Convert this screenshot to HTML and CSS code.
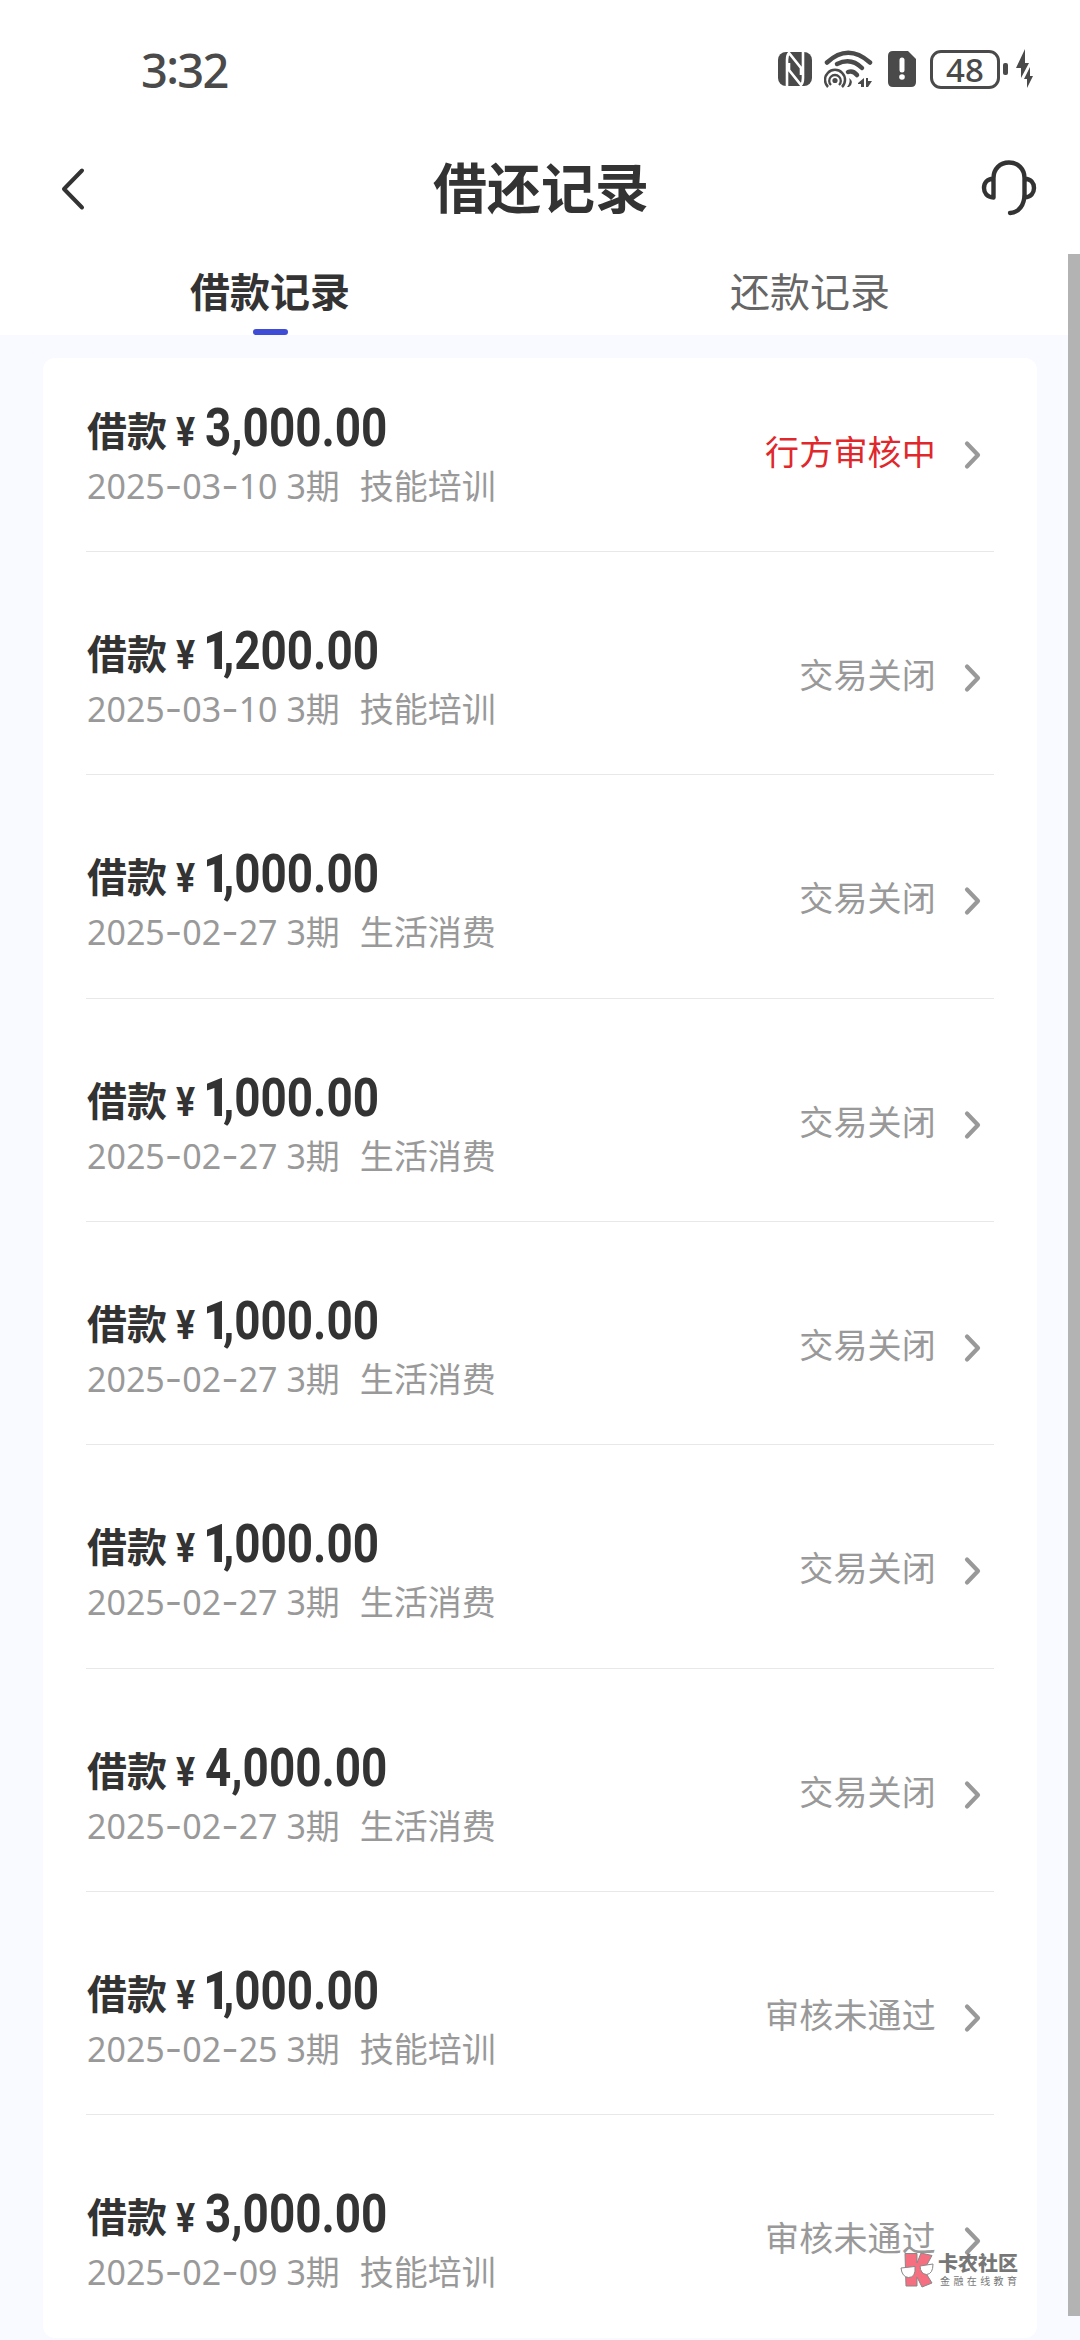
FILE: index.html
```html
<!DOCTYPE html>
<html lang="zh-CN">
<head>
<meta charset="utf-8">
<title>借还记录</title>
<link rel="stylesheet" href="styles.css">
</head>
<body>
<svg width="0" height="0" class="defs"><symbol id="chev" viewBox="0 0 20 32"><path d="M4 4.500L15 16L4 27.500" fill="none" stroke="#999" stroke-width="4.200" stroke-linecap="round" stroke-linejoin="round"/></symbol></svg>
<header class="status">
  <div class="clock">3<span class="colon">:</span>32</div>
  <div class="sys">
    <svg class="nfc" width="34" height="36" viewBox="0 0 34 36"><rect x="0" y="1" width="34" height="34" rx="8" fill="#4a4a4a"/><path d="M9 36V9Q9 4 11 2L23 17V24M25 0V27Q25 32 23 34L11 19V12" fill="none" stroke="#fff" stroke-width="2.600"/></svg>
    <svg class="wifi" width="50" height="38" viewBox="0 0 50 38" fill="none" stroke="#4a4a4a"><path d="M3 12.500Q24-7 46 12.500" stroke-width="4.500" stroke-linecap="round"/><path d="M13 14Q27 7 38 18" stroke-width="4.500" stroke-linecap="round"/><path d="M24 22Q29 20 33 25" stroke-width="4.500" stroke-linecap="round"/><path d="M4 37A10 10 0 1 1 18 37" stroke-width="2.500"/><path d="M7 35A5.800 5.800 0 1 1 15 35" stroke-width="2.300"/><circle cx="11" cy="30.500" r="2.600" fill="#4a4a4a" stroke="none"/><path d="M25 28Q31 32 25 37H23Q27 32 25 28ZM34 33L40 28V37H37V34H34ZM42 28H44V31H48L44 37H42Z" fill="#4a4a4a" stroke="none"/></svg>
    <svg class="sim" width="28" height="36" viewBox="0 0 28 36"><path d="M5 0H20L28 8V31Q28 36 23 36H5Q0 36 0 31V5Q0 0 5 0Z" fill="#4a4a4a"/><path d="M14 9V19" stroke="#fff" stroke-width="5" stroke-linecap="round"/><circle cx="14" cy="26" r="2.800" fill="#fff"/></svg>
    <div class="battery">48</div><div class="nub"></div>
    <svg class="bolt" width="18" height="40" viewBox="0 0 18 40" fill="#4a4a4a"><path d="M9 0L0 19H5V29L13 14H9ZM14 18L8 30H11V39L17 27H14Z"/></svg>
  </div>
</header>
<nav class="nav">
  <svg class="back" width="30" height="44" viewBox="0 0 30 44"><path d="M23 3.500L5 22L23 40.500" fill="none" stroke="#333" stroke-width="4" stroke-linecap="round" stroke-linejoin="round"/></svg>
  <h1>借还记录</h1>
  <svg class="help" width="56" height="56" viewBox="0 0 56 56"><path d="M12.500 37.500V18C12.500 9 19 2.500 28 2.500S43.500 9 43.500 18V34C43.500 45 38 52.500 29 53M12.500 18.500C6 19 3 23 3 28S6 37 12.500 37.500M43.500 18.500C50 19 53 23 53 28S50 37 43.500 37.500" fill="none" stroke="#333" stroke-width="4.400" stroke-linecap="round" stroke-linejoin="round"/></svg>
</nav>
<div class="tabs"><div class="tab active">借款记录</div><div class="tab">还款记录</div></div>
<main class="page">
<section class="card">
  <article class="row"><div class="info"><div class="loan">借款<span class="yen">¥</span><span class="amount">3,000.00</span></div><div class="meta">2025<i>-</i>03<i>-</i>10 3期<span class="use">技能培训</span></div></div><div class="state pending">行方审核中</div><svg class="chev"><use href="#chev"/></svg></article>
  <article class="row"><div class="info"><div class="loan">借款<span class="yen">¥</span><span class="amount"><b>1</b>,200.00</span></div><div class="meta">2025<i>-</i>03<i>-</i>10 3期<span class="use">技能培训</span></div></div><div class="state">交易关闭</div><svg class="chev"><use href="#chev"/></svg></article>
  <article class="row"><div class="info"><div class="loan">借款<span class="yen">¥</span><span class="amount"><b>1</b>,000.00</span></div><div class="meta">2025<i>-</i>02<i>-</i>27 3期<span class="use">生活消费</span></div></div><div class="state">交易关闭</div><svg class="chev"><use href="#chev"/></svg></article>
  <article class="row"><div class="info"><div class="loan">借款<span class="yen">¥</span><span class="amount"><b>1</b>,000.00</span></div><div class="meta">2025<i>-</i>02<i>-</i>27 3期<span class="use">生活消费</span></div></div><div class="state">交易关闭</div><svg class="chev"><use href="#chev"/></svg></article>
  <article class="row"><div class="info"><div class="loan">借款<span class="yen">¥</span><span class="amount"><b>1</b>,000.00</span></div><div class="meta">2025<i>-</i>02<i>-</i>27 3期<span class="use">生活消费</span></div></div><div class="state">交易关闭</div><svg class="chev"><use href="#chev"/></svg></article>
  <article class="row"><div class="info"><div class="loan">借款<span class="yen">¥</span><span class="amount"><b>1</b>,000.00</span></div><div class="meta">2025<i>-</i>02<i>-</i>27 3期<span class="use">生活消费</span></div></div><div class="state">交易关闭</div><svg class="chev"><use href="#chev"/></svg></article>
  <article class="row"><div class="info"><div class="loan">借款<span class="yen">¥</span><span class="amount">4,000.00</span></div><div class="meta">2025<i>-</i>02<i>-</i>27 3期<span class="use">生活消费</span></div></div><div class="state">交易关闭</div><svg class="chev"><use href="#chev"/></svg></article>
  <article class="row"><div class="info"><div class="loan">借款<span class="yen">¥</span><span class="amount"><b>1</b>,000.00</span></div><div class="meta">2025<i>-</i>02<i>-</i>25 3期<span class="use">技能培训</span></div></div><div class="state">审核未通过</div><svg class="chev"><use href="#chev"/></svg></article>
  <article class="row"><div class="info"><div class="loan">借款<span class="yen">¥</span><span class="amount">3,000.00</span></div><div class="meta">2025<i>-</i>02<i>-</i>09 3期<span class="use">技能培训</span></div></div><div class="state">审核未通过</div><svg class="chev"><use href="#chev"/></svg></article>
</section>
</main>
<div class="scrollbar"></div>
<div class="watermark">
  <svg width="34" height="36" viewBox="0 0 34 36"><path d="M5 1.500H17V11L21 1L32 3.500L24 18L32 31L22 35L17 25V34H6Z" fill="#f56f80" stroke="#888" stroke-width="1"/><path d="M1 16L15 14.500Q16 25.500 8.500 25.500Q2 25 1 16ZM20 14L33 12Q33 22 26.500 22.500Q20.500 22 20 14Z" fill="#fff" stroke="#888" stroke-width="1"/></svg>
  <div class="brand"><strong>卡农社区</strong><small>金融在线教育</small></div>
</div>
</body>
</html>
```
FILE: styles.css
```css
* { box-sizing: border-box; }
body { margin: 0; width: 1080px; height: 2340px; overflow: hidden; position: relative; background: #fff; color: #333; font-family: "Noto Sans", "Noto Sans CJK SC", sans-serif; }
.defs { position: absolute; }
svg { display: block; flex: none; }

.status { height: 138px; padding: 0 46px 0 141px; display: flex; justify-content: space-between; align-items: center; color: #4a4a4a; }
.clock { font-size: 47px; line-height: 60px; font-weight: 500; letter-spacing: -1.7px; padding-top: 2px; }
.colon { display: inline-block; transform: translateY(-4px); }
.sys { display: flex; align-items: center; }
.wifi { margin-left: 12px; }
.sim { margin-left: 14px; }
.battery { margin-left: 14px; width: 70px; height: 39px; border: 3px solid #4a4a4a; border-radius: 11px; font-size: 33px; line-height: 33px; font-weight: 500; text-align: center; }
.nub { width: 5px; height: 12px; margin-left: 3px; border-radius: 2px; background: #4a4a4a; }
.bolt { margin-left: 8px; }

.nav { height: 114px; padding: 0 43px 0 59px; display: flex; justify-content: space-between; }
.back { margin-top: 29px; }
.nav h1 { margin: 8px 0 0 12px; font: 700 54px/80px "Noto Sans CJK SC", sans-serif; }
.help { margin-top: 22px; }

.tabs { height: 83px; display: flex; }
.tab { flex: 1; display: flex; flex-direction: column; align-items: center; font: 400 40px/60px "Noto Sans CJK SC", sans-serif; color: #666; padding-top: 8px; }
.active { font-weight: 700; color: #333; }
.active::after { content: ""; width: 35px; height: 6px; margin-top: 9px; border-radius: 3px; background: #3f4dd6; }

.page { height: 2005px; padding: 23px 43px 2px; background: #f9faff; }
.card { height: 1980px; padding: 0 43px; border-radius: 12px; background: #fff; }
.row { height: 223.33px; padding: 29px 11px 0 1px; display: flex; border-bottom: 1px solid #e8e8ea; }
.row:first-child { height: 194px; padding-top: 0; }
.row:last-child { border-bottom: 0; }
.info { flex: 1; padding-top: 41px; }
.loan { height: 60px; display: flex; align-items: baseline; font: 700 40px/60px "Noto Sans CJK SC", sans-serif; }
.yen { margin-left: 9px; font: 700 41px/50px Roboto, sans-serif; transform: scaleX(.87); transform-origin: left; }
.amount { margin-left: 7px; font: 700 53px/50px Roboto, sans-serif; transform: scaleX(.865); transform-origin: left; }
.amount b { letter-spacing: -8px; margin-left: -2px; }
.meta { margin-top: 1px; font-size: 34px; line-height: 52px; color: #999; font-weight: 400; white-space: nowrap; }
.meta i { font: 400 38px/30px Inter, sans-serif; }
.use { margin-left: 20px; }
.state { margin-top: 68px; font: 400 34px/50px "Noto Sans CJK SC", sans-serif; letter-spacing: .2px; color: #999; }
.pending { color: #e0282c; }
.chev { width: 20px; height: 32px; margin: 81px 0 0 27px; }

.scrollbar { position: absolute; left: 1068px; top: 254px; width: 12px; height: 2062px; background: #b3b3b3; }
.watermark { position: absolute; left: 900px; top: 2252px; display: flex; gap: 4px; color: #777; font-family: "Noto Sans CJK SC", sans-serif; }
.brand { display: flex; flex-direction: column; }
.brand strong { font-size: 20px; line-height: 22px; font-weight: 900; }
.brand small { font-size: 10px; line-height: 14px; letter-spacing: 3.400px; margin-left: 2px; }
```
